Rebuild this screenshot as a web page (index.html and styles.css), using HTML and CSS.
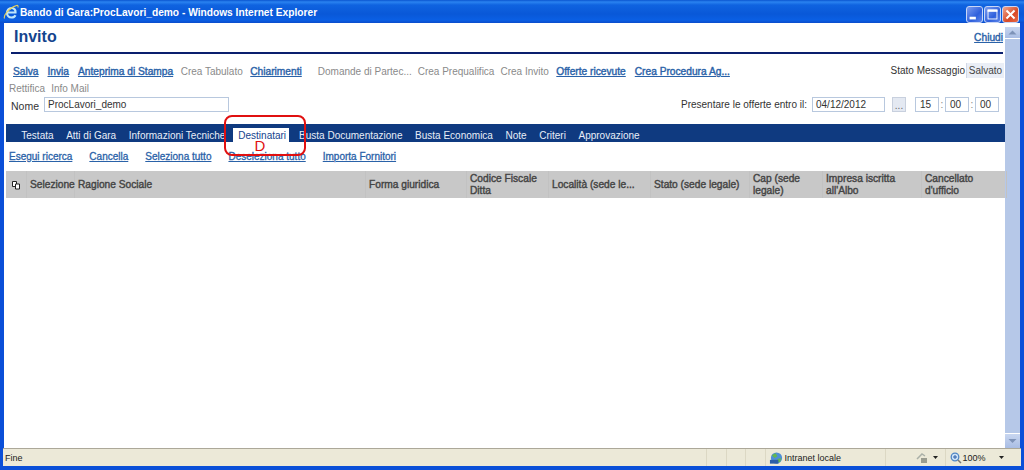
FILE: index.html
```html
<!DOCTYPE html>
<html lang="it">
<head>
<meta charset="utf-8">
<title>Bando di Gara:ProcLavori_demo - Windows Internet Explorer</title>
<link rel="stylesheet" href="styles.css">
</head>
<body>
<div class="window">
  <header class="titlebar">
    <svg class="ie-logo" width="16" height="16" viewBox="0 0 16 16"><path d="M4 8.500h8.500C12.800 5.800 11 4 8.500 4 5.800 4 4 6.200 4 9c0 2.800 2 4.500 4.500 4.500 1.800 0 3.200-.8 4-2.300" fill="none" stroke="#bfe6fb" stroke-width="2.200"/><path d="M1.500 14.500C.3 11.500 5.500 4 13.500 1.500c1.400-.4 1.900.6 1.300 2" fill="none" stroke="#e6d25e" stroke-width="1.100"/></svg>
    <span class="title-text">Bando di Gara:ProcLavori_demo - Windows Internet Explorer</span>
    <div class="win-buttons">
      <span class="win-btn"><svg width="17" height="17" viewBox="0 0 19 19"><rect x="4" y="12" width="7" height="3" fill="#fff"/></svg></span>
      <span class="win-btn"><svg width="17" height="17" viewBox="0 0 19 19"><rect x="4.500" y="4.500" width="10" height="10" fill="none" stroke="#fff"/><rect x="4" y="4" width="11" height="2.500" fill="#fff"/></svg></span>
      <span class="win-btn win-close"><svg width="17" height="17" viewBox="0 0 19 19"><path d="M5 5l9 9M14 5l-9 9" stroke="#fff" stroke-width="2.200"/></svg></span>
    </div>
  </header>

  <div class="main">
    <div class="page">
      <div class="heading">
        <h1 class="page-title">Invito</h1>
        <a class="link close-link">Chiudi</a>
      </div>

      <div class="tools">
        <div class="toolbar">
          <div class="tool-row">
            <a class="link tool">Salva</a>
            <a class="link tool">Invia</a>
            <a class="link tool">Anteprima di Stampa</a>
            <span class="off tool-off">Crea Tabulato</span>
            <a class="link tool">Chiarimenti</a>
            <span class="off tool-off tool-far">Domande di Partec...</span>
            <span class="off tool-off">Crea Prequalifica</span>
            <span class="off tool-off">Crea Invito</span>
            <a class="link tool">Offerte ricevute</a>
            <a class="link tool">Crea Procedura Ag...</a>
          </div>
          <div class="tool-row tool-row-second">
            <span class="off tool-off">Rettifica</span>
            <span class="off tool-off">Info Mail</span>
          </div>
        </div>
        <div class="status-msg">
          <span class="label">Stato Messaggio</span>
          <span class="status-val">Salvato</span>
        </div>
      </div>

      <div class="form-row">
        <div class="name-field">
          <span class="label">Nome</span>
          <span class="field field-name">ProcLavori_demo</span>
        </div>
        <div class="date-field">
          <span class="label date-label">Presentare le offerte entro il:</span>
          <span class="field field-date">04/12/2012</span>
          <span class="dots">...</span>
          <span class="field field-time">15</span><span class="colon">:</span>
          <span class="field field-time">00</span><span class="colon">:</span>
          <span class="field field-time">00</span>
        </div>
      </div>

      <nav class="tabs">
        <span class="tab">Testata</span>
        <span class="tab">Atti di Gara</span>
        <span class="tab">Informazioni Tecniche</span>
        <span class="tab tab-active">Destinatari</span>
        <span class="tab">Busta Documentazione</span>
        <span class="tab">Busta Economica</span>
        <span class="tab">Note</span>
        <span class="tab">Criteri</span>
        <span class="tab">Approvazione</span>
      </nav>

      <div class="actions">
        <a class="link">Esegui ricerca</a>
        <a class="link">Cancella</a>
        <a class="link">Seleziona tutto</a>
        <a class="link">Deseleziona tutto</a>
        <a class="link">Importa Fornitori</a>
      </div>

      <div class="grid-head">
        <span class="col col-icon"><svg width="10" height="10" viewBox="0 0 10 10"><path d="M1.500 1.500h4v5h-4z" fill="#fff" stroke="#222"/><path d="M4.500 4h4v5h-4z" fill="#fff" stroke="#222"/></svg></span>
        <span class="col">Selezione</span>
        <span class="col">Ragione Sociale</span>
        <span class="col">Forma giuridica</span>
        <span class="col">Codice Fiscale Ditta</span>
        <span class="col">Località (sede le...</span>
        <span class="col">Stato (sede legale)</span>
        <span class="col">Cap (sede legale)</span>
        <span class="col">Impresa iscritta all'Albo</span>
        <span class="col">Cancellato d'ufficio</span>
      </div>

      <div class="callout"><span class="callout-letter">D</span></div>
    </div>

    <aside class="scrollbar">
      <span class="sb-btn"><svg width="15" height="11" viewBox="0 0 15 11"><path d="M3.500 7.500l4-4 4 4z" fill="#7e93b8"/></svg></span>
      <span class="sb-thumb"></span>
      <span class="sb-btn"><svg width="15" height="14" viewBox="0 0 15 14"><path d="M3.500 5l4 4 4-4z" fill="#7e93b8"/></svg></span>
    </aside>
  </div>

  <footer class="statusbar">
    <span class="st-cell st-grow">Fine</span>
    <span class="st-cell st-small"></span>
    <span class="st-cell st-small"></span>
    <span class="st-cell st-small"></span>
    <span class="st-cell st-zone">
      <svg width="15" height="14" viewBox="0 0 16 14"><circle cx="8" cy="7" r="6" fill="#4f8fd6"/><path d="M3 4l4-2 2 3-3 2zM9 8l4-1-1 4-3 1z" fill="#63b84f"/><rect x="1" y="9" width="9" height="4" fill="#2d5fa8"/></svg>
      Intranet locale
    </span>
    <span class="st-cell st-lock">
      <svg width="12" height="12" viewBox="0 0 12 12"><path d="M1 7l5-5 3 2" fill="none" stroke="#aab0a8" stroke-width="1.500"/><rect x="5" y="6" width="6" height="5" fill="#9a9c90"/></svg>
      <svg class="caret" width="5" height="3" viewBox="0 0 5 3"><path d="M0 0h5L2.500 3z" fill="#222"/></svg>
    </span>
    <span class="st-cell st-zoom">
      <svg width="12" height="12" viewBox="0 0 12 12"><circle cx="5" cy="5" r="3.800" fill="#cfe4f8" stroke="#4f86c6" stroke-width="1.300"/><path d="M3 5h4M5 3v4" stroke="#2d5fa8"/><path d="M8 8l3 3" stroke="#777" stroke-width="1.500"/></svg>
      100%
      <svg class="caret caret-far" width="5" height="3" viewBox="0 0 5 3"><path d="M0 0h5L2.500 3z" fill="#222"/></svg>
    </span>
    <span class="st-grip"></span>
  </footer>
</div>
</body>
</html>
```

FILE: styles.css
```css
* { box-sizing: border-box; }
html, body { margin: 0; padding: 0; }
body { width: 1024px; height: 470px; overflow: hidden; font-family: "Liberation Sans", Arial, sans-serif; font-size: 10px; color: #333; }

.window { width: 1024px; height: 470px; display: flex; flex-direction: column; background: #0a4fd8; padding: 0 4px 4px 4px; position: relative; }

.titlebar { height: 23px; margin: 0 -4px; padding: 0 5px 0 3px; display: flex; align-items: center; gap: 1px; background: linear-gradient(#0a55d0 0, #2a83f0 2px, #0f63e0 5px, #0958d8 14px, #0a5fe4 20px, #0a4ccc 23px); }
.ie-logo { flex: none; margin-top: 1px; }
.title-text { font-size: 10.200px; font-weight: bold; color: #fff; white-space: nowrap; margin-top: 1px; }
.win-buttons { margin-left: auto; display: flex; gap: 1px; margin-top: 5px; }
.win-btn { width: 17px; height: 17px; background: linear-gradient(135deg, #7c9df0, #2f60dc 60%, #5e86ea); border: 1px solid #c8d6f6; border-radius: 3px; display: flex; }
.win-btn svg { margin: -1px; }
.win-close { background: linear-gradient(135deg, #f0a890, #d84a28 60%, #e86a48); }

.main { flex: 1; display: flex; min-height: 0; background: #fff; }
.page { flex: 1; min-width: 0; position: relative; background: #fff; }

.link { color: #2a62a8; font-size: 10.200px; -webkit-text-stroke: .4px #2a62a8; text-decoration: underline; white-space: nowrap; }
.off { color: #8a8a8a; white-space: nowrap; }
.label { color: #333; white-space: nowrap; }

.heading { height: 31px; margin: 0 2px 0 7px; padding: 4px 0 0 3px; display: flex; justify-content: space-between; border-bottom: 2px solid #0a1f6e; }
.page-title { margin: 0; font-size: 16px; line-height: 19px; font-weight: bold; color: #14448e; }
.close-link { margin-top: 5px; }

.tools { margin-top: 9px; padding-left: 4.500px; display: flex; justify-content: space-between; }
.tool-row { display: flex; height: 17px; align-items: center; }
.tool { padding: 0 4.500px; }
.tool-off { padding: 0 3px; }
.tool-far { margin-left: 8.500px; }
.tool-row-second { margin-left: -2.500px; }
.status-msg { display: flex; align-items: flex-start; gap: 1px; margin-right: 1px; }
.status-msg .label { margin-top: 2px; }
.status-val { width: 38px; height: 15px; line-height: 15px; background: #eaeef6; border-left: 1px solid #d2d8e6; text-align: center; color: #444; }

.form-row { padding: 0 6px 0 7px; display: flex; justify-content: space-between; height: 27px; }
.name-field, .date-field { display: flex; align-items: flex-start; }
.name-field .label { margin: 3px 5px 0 0; font-size: 10.500px; }
.field { height: 15px; line-height: 14px; border: 1px solid #b8c8de; background: #fff; padding-left: 3px; color: #333; }
.field-name { width: 185px; }
.date-label { margin: 2px 5px 0 0; }
.field-date { width: 73px; }
.dots { width: 14px; height: 15px; margin: 0 9px 0 7px; background: #e4e9f2; border: 1px solid #c8d0de; text-align: center; line-height: 15px; color: #666; }
.field-time { width: 24px; padding-left: 4px; }
.colon { width: 6px; text-align: center; line-height: 16px; color: #888; }

.tabs { height: 18px; margin-left: 2px; padding-left: 9px; display: flex; background: #0f3a80; }
.tab { padding: 5px 6.300px 0; color: #e8eef8; white-space: nowrap; line-height: 13px; }
.tab-active { background: #fff; color: #14448e; height: 14px; margin: 4px 3.700px 0 1.700px; padding: 1px 3px 0 5px; }

.actions { height: 29px; padding: 8px 0 0 5px; display: flex; gap: 17px; }
.actions .link { font-size: 10px; line-height: 13px; -webkit-text-stroke: .3px #2a62a8; }

.grid-head { height: 27px; margin-left: 2px; background: #c8c8c8; display: grid; grid-template-columns: 21px 48px 291px 101px 82px 102px 99px 73px 99px 85px; align-items: center; }
.col { padding: 0 2px 0 3px; font-size: 10.200px; -webkit-text-stroke: .4px #444; color: #444; line-height: 12px; height: 100%; display: flex; align-items: center; border-right: 1px solid #c2c2c2; }
.col-icon { justify-content: center; padding: 0; }

.callout { position: absolute; left: 220px; top: 92px; width: 82px; height: 41px; border: 2px solid #e01010; border-radius: 8px; display: flex; justify-content: center; align-items: flex-end; }
.callout-letter { font-size: 15px; color: #e01010; line-height: 12px; margin: 0 10px 2px 0; }

.scrollbar { width: 15px; flex: none; display: flex; flex-direction: column; padding-top: 4px; background: #fff; }
.sb-btn { height: 14px; background: linear-gradient(#c8d6f0, #a9bde4); display: flex; flex: none; }
.sb-btn:first-child { height: 11px; }
.sb-thumb { flex: 1; background: #b6c8e8; margin: 1px 0; }

.statusbar { height: 18px; flex: none; margin: 0 -1px; background: #ece9d8; border-top: 1px solid #aca899; display: flex; align-items: center; font-size: 9px; color: #222; }
.st-cell { height: 100%; display: flex; align-items: center; border-right: 1px solid #dcd8c4; white-space: nowrap; }
.st-grow { width: 704px; padding-left: 2px; }
.st-small { width: 19.500px; }
.st-zone { width: 120px; padding-left: 3px; gap: 1px; }
.st-lock { width: 60px; padding-left: 30px; gap: 5px; }
.st-zoom { width: 66px; padding-left: 4px; gap: 1px; border-right: 0; }
.caret-far { margin-left: 12px; }
.st-grip { flex: 1; }
```
